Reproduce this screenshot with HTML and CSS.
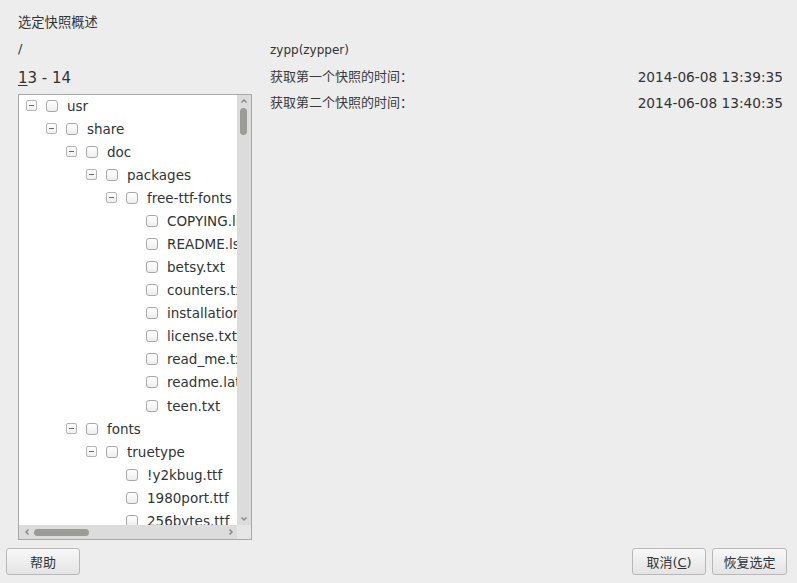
FILE: index.html
```html
<!DOCTYPE html>
<html>
<head>
<meta charset="utf-8">
<link rel="stylesheet" href="styles.css">
</head>
<body>
<div class="window">
  <div class="top">
    <div class="left">
      <div class="title">选定快照概述</div>
      <div class="path">/</div>
      <div class="range"><u>1</u>3 - 14</div>
      <div class="tree">
        <div class="tree-main">
          <div class="rows">
            <div class="row d0"><span class="exp"></span><span class="cb"></span><span class="lbl">usr</span></div>
            <div class="row d1"><span class="exp"></span><span class="cb"></span><span class="lbl">share</span></div>
            <div class="row d2"><span class="exp"></span><span class="cb"></span><span class="lbl">doc</span></div>
            <div class="row d3"><span class="exp"></span><span class="cb"></span><span class="lbl">packages</span></div>
            <div class="row d4"><span class="exp"></span><span class="cb"></span><span class="lbl">free-ttf-fonts</span></div>
            <div class="row d5"><span class="noexp"></span><span class="cb"></span><span class="lbl">COPYING.lib</span></div>
            <div class="row d5"><span class="noexp"></span><span class="cb"></span><span class="lbl">README.lsm</span></div>
            <div class="row d5"><span class="noexp"></span><span class="cb"></span><span class="lbl">betsy.txt</span></div>
            <div class="row d5"><span class="noexp"></span><span class="cb"></span><span class="lbl">counters.txt</span></div>
            <div class="row d5"><span class="noexp"></span><span class="cb"></span><span class="lbl">installation.txt</span></div>
            <div class="row d5"><span class="noexp"></span><span class="cb"></span><span class="lbl">license.txt</span></div>
            <div class="row d5"><span class="noexp"></span><span class="cb"></span><span class="lbl">read_me.txt</span></div>
            <div class="row d5"><span class="noexp"></span><span class="cb"></span><span class="lbl">readme.latin1</span></div>
            <div class="row d5"><span class="noexp"></span><span class="cb"></span><span class="lbl">teen.txt</span></div>
            <div class="row d2"><span class="exp"></span><span class="cb"></span><span class="lbl">fonts</span></div>
            <div class="row d3"><span class="exp"></span><span class="cb"></span><span class="lbl">truetype</span></div>
            <div class="row d4"><span class="noexp"></span><span class="cb"></span><span class="lbl">!y2kbug.ttf</span></div>
            <div class="row d4"><span class="noexp"></span><span class="cb"></span><span class="lbl">1980port.ttf</span></div>
            <div class="row d4"><span class="noexp"></span><span class="cb"></span><span class="lbl">256bytes.ttf</span></div>
            <div class="row d4"><span class="noexp"></span><span class="cb"></span><span class="lbl">3dlet.ttf</span></div>
          </div>
          <div class="vscroll">
            <svg class="arr" width="8" height="6" viewBox="0 0 8 6"><polyline points="1.5,4.5 4,2 6.5,4.5" fill="none" stroke="#8a8a8a" stroke-width="1.5"/></svg>
            <div class="vthumb"></div>
            <div class="vspace"></div>
            <svg class="arr" width="8" height="6" viewBox="0 0 8 6"><polyline points="1.5,1.5 4,4 6.5,1.5" fill="none" stroke="#8a8a8a" stroke-width="1.5"/></svg>
          </div>
        </div>
        <div class="tree-bottom">
          <div class="hscroll">
            <svg class="harr" width="6" height="8" viewBox="0 0 6 8"><polyline points="4.5,1.5 2,4 4.5,6.5" fill="none" stroke="#8a8a8a" stroke-width="1.5"/></svg>
            <div class="hthumb"></div>
            <div class="hspace"></div>
            <svg class="harr" width="6" height="8" viewBox="0 0 6 8"><polyline points="1.5,1.5 4,4 1.5,6.5" fill="none" stroke="#8a8a8a" stroke-width="1.5"/></svg>
          </div>
          <div class="corner"></div>
        </div>
      </div>
    </div>
    <div class="right">
      <div class="name">zypp(zypper)</div>
      <div class="info"><span class="cjk">获取第一个快照的时间：</span><span class="date">2014-06-08 13:39:35</span></div>
      <div class="info"><span class="cjk">获取第二个快照的时间：</span><span class="date">2014-06-08 13:40:35</span></div>
    </div>
  </div>
  <div class="footer">
    <button class="btn">帮助</button>
    <div class="spacer"></div>
    <button class="btn">取消(<u>C</u>)</button>
    <button class="btn">恢复选定</button>
  </div>
</div>
</body>
</html>
```

FILE: styles.css
```css
html, body {
  margin: 0;
  padding: 0;
  background: #ededed;
}
body {
  font-family: "DejaVu Sans", "Noto Sans CJK SC", sans-serif;
  font-size: 13px;
  color: #2e3436;
}
.window {
  width: 797px;
  height: 583px;
  display: flex;
  flex-direction: column;
}
.top {
  display: flex;
  height: 540px;
}
.left {
  width: 234px;
  padding-left: 18px;
  display: flex;
  flex-direction: column;
}
.title {
  margin-top: 15px;
  height: 16px;
  line-height: 16px;
  font-size: 13.3px;
  color: #333;
}
.path {
  margin-top: 10px;
  height: 16px;
  line-height: 16px;
  color: #333;
}
.range {
  margin-top: 11px;
  height: 20px;
  line-height: 20px;
  font-size: 15px;
  color: #333;
}
.range u {
  text-decoration-thickness: 1px;
  text-underline-offset: 2px;
}
.tree {
  margin-top: 6px;
  flex: 1;
  border: 1px solid #a8a8a8;
  background: #fff;
  display: flex;
  flex-direction: column;
  overflow: hidden;
}
.tree-main {
  flex: 1;
  display: flex;
  min-height: 0;
}
.rows {
  flex: 1;
  overflow: hidden;
}
.row {
  height: 23.08px;
  display: flex;
  align-items: center;
  white-space: nowrap;
  padding-left: 7px;
}
.row:first-child {
  margin-top: -1px;
}
.d1 { padding-left: 27px; }
.d2 { padding-left: 47px; }
.d3 { padding-left: 67px; }
.d4 { padding-left: 87px; }
.d5 { padding-left: 107px; }
.exp, .noexp {
  width: 11px;
  height: 11px;
  margin-right: 9px;
  flex: none;
  box-sizing: border-box;
}
.exp {
  border: 1px solid #b4b4b4;
  border-radius: 2px;
  background: linear-gradient(#fff, #f0f0f0);
  position: relative;
}
.exp::after {
  content: "";
  position: absolute;
  left: 2px;
  right: 2px;
  top: 4px;
  height: 1px;
  background: #6a6a6a;
}
.cb {
  width: 12px;
  height: 12px;
  box-sizing: border-box;
  border: 1px solid #a9a9a9;
  border-radius: 3px;
  background: linear-gradient(#ffffff, #eeeeee);
  margin-right: 9px;
  flex: none;
}
.lbl {
  font-size: 13.5px;
  color: #2e3436;
}
.vscroll {
  width: 14px;
  flex: none;
  background: #dcdcdc;
  display: flex;
  flex-direction: column;
  align-items: center;
  padding: 3px 0;
  box-sizing: border-box;
}
.arr {
  flex: none;
  margin: 0 0 0 -1px;
}
.vthumb {
  width: 7px;
  height: 27px;
  margin-top: 4px;
  border-radius: 4px;
  background: #9b9c98;
  margin-left: -1px;
}
.vspace {
  flex: 1;
}
.tree-bottom {
  height: 14px;
  display: flex;
  flex: none;
}
.hscroll {
  flex: 1;
  background: #dcdcdc;
  display: flex;
  align-items: center;
  padding: 0 3px 0 5px;
}
.harr {
  flex: none;
}
.hthumb {
  width: 55px;
  height: 7px;
  margin-left: 4px;
  border-radius: 4px;
  background: #9b9c98;
}
.hspace {
  flex: 1;
}
.corner {
  width: 14px;
  background: #e6e6e6;
}
.right {
  flex: 1;
  padding-left: 18px;
  padding-right: 14px;
  display: flex;
  flex-direction: column;
  font-size: 13px;
  color: #333;
}
.name {
  margin-top: 42px;
  height: 16px;
  line-height: 16px;
  font-size: 12px;
}
.info {
  margin-top: 11px;
  height: 16px;
  line-height: 16px;
  display: flex;
  justify-content: space-between;
}
.info + .info {
  margin-top: 10px;
}
.cjk {
  font-size: 13px;
  color: #3a3a3a;
}
.date {
  font-size: 13.7px;
}
.footer {
  flex: 1;
  display: flex;
  align-items: flex-start;
  padding: 8px 10px 0 6px;
  gap: 6px;
}
.spacer {
  flex: 1;
}
.btn {
  width: 74px;
  height: 27px;
  box-sizing: border-box;
  border: 1px solid #b8b8b8;
  border-radius: 3px;
  background: linear-gradient(#f8f8f8, #e4e4e4);
  font-family: "DejaVu Sans", "Noto Sans CJK SC", sans-serif;
  font-size: 13px;
  color: #2e3436;
  padding: 0;
}
.btn:last-child {
  width: 75px;
}
```
